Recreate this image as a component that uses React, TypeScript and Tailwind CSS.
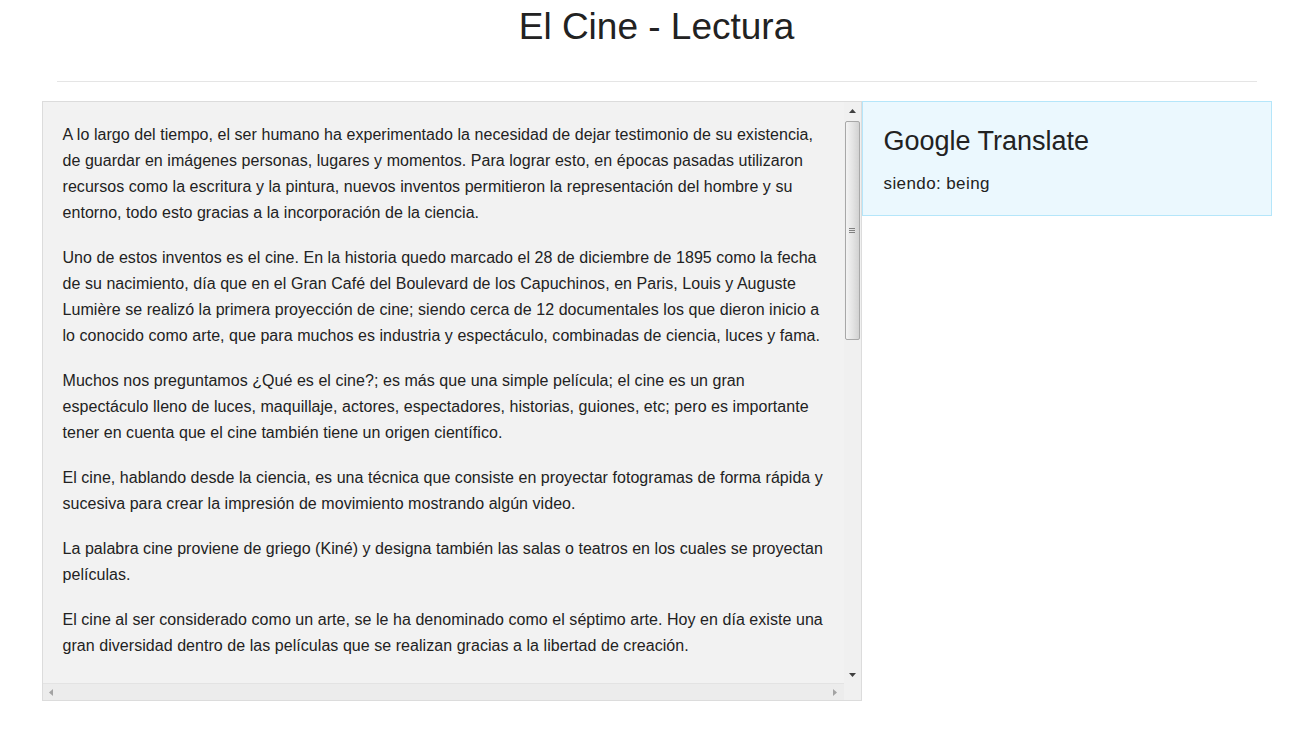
import React from "react";

const paragraphs = [
  "A lo largo del tiempo, el ser humano ha experimentado la necesidad de dejar testimonio de su existencia, de guardar en imágenes personas, lugares y momentos. Para lograr esto, en épocas pasadas utilizaron recursos como la escritura y la pintura, nuevos inventos permitieron la representación del hombre y su entorno, todo esto gracias a la incorporación de la ciencia.",
  "Uno de estos inventos es el cine. En la historia quedo marcado el 28 de diciembre de 1895 como la fecha de su nacimiento, día que en el Gran Café del Boulevard de los Capuchinos, en Paris, Louis y Auguste Lumière se realizó la primera proyección de cine; siendo cerca de 12 documentales los que dieron inicio a lo conocido como arte, que para muchos es industria y espectáculo, combinadas de ciencia, luces y fama.",
  "Muchos nos preguntamos ¿Qué es el cine?; es más que una simple película; el cine es un gran espectáculo lleno de luces, maquillaje, actores, espectadores, historias, guiones, etc; pero es importante tener en cuenta que el cine también tiene un origen científico.",
  "El cine, hablando desde la ciencia, es una técnica que consiste en proyectar fotogramas de forma rápida y sucesiva para crear la impresión de movimiento mostrando algún video.",
  "La palabra cine proviene de griego (Kiné) y designa también las salas o teatros en los cuales se proyectan películas.",
  "El cine al ser considerado como un arte, se le ha denominado como el séptimo arte. Hoy en día existe una gran diversidad dentro de las películas que se realizan gracias a la libertad de creación.",
];

function Arrow({ dir }: { dir: "up" | "down" | "left" | "right" }) {
  const pts =
    dir === "up"
      ? "0,4 3.5,0 7,4"
      : dir === "down"
      ? "0,0 7,0 3.5,4"
      : dir === "left"
      ? "4,0 4,7 0,3.5"
      : "0,0 0,7 4,3.5";
  const w = dir === "up" || dir === "down" ? 7 : 4;
  const h = dir === "up" || dir === "down" ? 4 : 7;
  return (
    <svg width={w} height={h} viewBox={`0 0 ${w} ${h}`}>
      <polygon points={pts} fill={dir === "left" || dir === "right" ? "#a3a3a3" : "#404040"} />
    </svg>
  );
}

export default function App() {
  return (
    <div
      className="min-h-screen bg-white text-[#333]"
      style={{ fontFamily: '"Liberation Sans", Arial, sans-serif' }}
    >
      <div className="mx-auto w-[1230px]">
        <h1 className="mt-[7px] text-center text-[37px] leading-[40px] text-[#222]">
          El Cine - Lectura
        </h1>
        <div className="mx-[15px] mt-[34px] border-t border-[#e5e5e5]" />
        <div className="mt-[19px] flex">
          {/* Reading box */}
          <div className="flex h-[600px] w-[820px] flex-col border border-[#dcdcdc] bg-[#f2f2f2]">
            <div className="flex min-h-0 flex-1">
              <div className="flex-1 overflow-hidden px-[20px] pt-[20px] text-[16px] leading-[26px] tracking-[0.05px] text-[#222]">
                {paragraphs.map((p, i) => (
                  <p key={i} className="mb-[19px]">
                    {p}
                  </p>
                ))}
              </div>
              {/* vertical scrollbar */}
              <div className="flex w-[17px] flex-col bg-[#f0f0f0]">
                <div className="flex h-[17px] items-center justify-center">
                  <Arrow dir="up" />
                </div>
                <div className="relative flex-1">
                  <div className="absolute left-[1px] right-[1px] top-[2px] flex h-[219px] items-center justify-center rounded-[2px] border border-[#a8a8a8] bg-gradient-to-r from-[#f4f4f4] via-[#e4e4e4] to-[#d2d2d2]">
                    <div className="flex flex-col gap-[1px]">
                      <div className="h-px w-[6px] bg-[#808080]" />
                      <div className="h-px w-[6px] bg-[#808080]" />
                      <div className="h-px w-[6px] bg-[#808080]" />
                    </div>
                  </div>
                </div>
                <div className="flex h-[17px] items-center justify-center">
                  <Arrow dir="down" />
                </div>
              </div>
            </div>
            {/* horizontal scrollbar */}
            <div className="flex h-[17px]">
              <div className="flex flex-1 items-center border-t border-[#e3e3e3] bg-[#ececec]">
                <div className="flex w-[17px] items-center justify-center">
                  <Arrow dir="left" />
                </div>
                <div className="flex-1" />
                <div className="flex w-[17px] items-center justify-center">
                  <Arrow dir="right" />
                </div>
              </div>
              <div className="w-[17px] bg-[#f0f0f0]" />
            </div>
          </div>
          {/* Translate box */}
          <div className="h-[115px] w-[410px] border border-[#b5e6fa] bg-[#ebf8fe] px-[21px] pt-[23px]">
            <h3 className="text-[27px] leading-[32px] text-[#222]">Google Translate</h3>
            <p className="mt-[16px] text-[17px] leading-[22px] tracking-[0.4px] text-[#222]">siendo: being</p>
          </div>
        </div>
      </div>
    </div>
  );
}
